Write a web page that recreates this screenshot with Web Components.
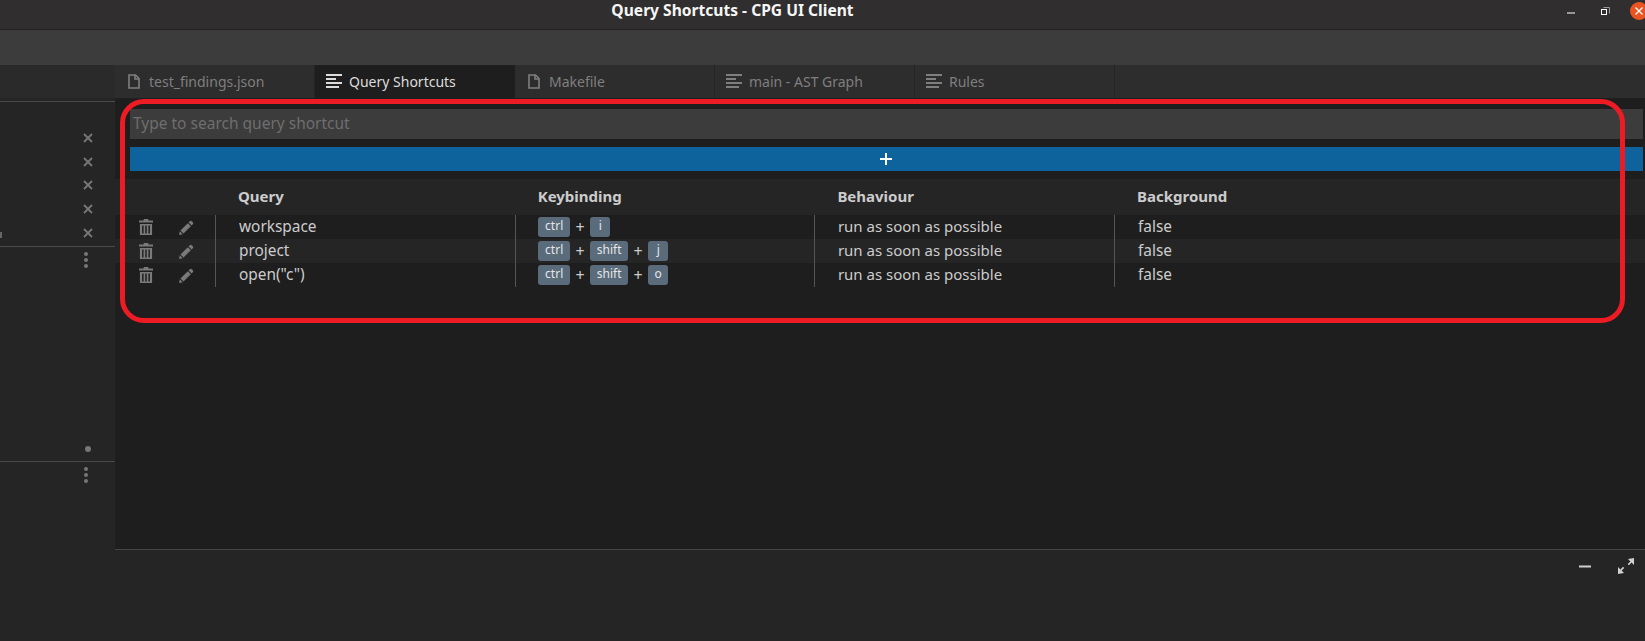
<!DOCTYPE html>
<html>
<head>
<meta charset="utf-8">
<title>Query Shortcuts - CPG UI Client</title>
<style>
    html, body { margin: 0; height: 100%; background: #1e1e1e; overflow: hidden; }
    body { font-family: "Noto Sans", sans-serif; }
</style>
</head>
<body>
<app-window>
    <title-bar slot="title">Query Shortcuts - CPG UI Client</title-bar>
    <side-bar slot="side"></side-bar>
    <tab-strip slot="tabs"></tab-strip>
    <query-shortcuts slot="main"></query-shortcuts>
    <bottom-panel slot="bottom"></bottom-panel>
</app-window>

<script>
const ICONS = {
    file: `<svg width="12" height="15" viewBox="0 0 12 15" fill="none" stroke="currentColor" stroke-width="1.6"><path d="M1 1h6.5L11 4.5V14H1z"/><path d="M7 1v4h4"/></svg>`,
    lines: `<svg width="16" height="15" viewBox="0 0 16 15" fill="currentColor"><rect y="0" width="16" height="2"/><rect y="4" width="10" height="2"/><rect y="8" width="16" height="2"/><rect y="12" width="13" height="2"/></svg>`,
    trash: `<svg width="14" height="16" viewBox="0 0 15 16" preserveAspectRatio="none" fill="currentColor"><path d="M5 0h5v1.5h5V3.500H0V1.500h5z"/><path d="M1 5h13v11H1zM3.300 6.500v8h1.600v-8zM6.700 6.500v8h1.600v-8zM10.100 6.500v8h1.600v-8z" fill-rule="evenodd"/></svg>`,
    pencil: `<svg width="15" height="15" viewBox="0 0 15 15" fill="currentColor"><path d="M10.800 1.200a1.400 1.400 0 0 1 2 0l1 1a1.400 1.400 0 0 1 0 2L12.600 5.400 9.600 2.400z"/><path d="M8.800 3.200l3 3-7.300 7.300-3-3z"/><path d="M.8 11.300l2.900 2.900L0 15z"/></svg>`,
    close: `<svg width="10" height="10" viewBox="0 0 10 10" stroke="currentColor" stroke-width="1.800"><path d="M1 1l8 8M9 1l-8 8"/></svg>`
};

// outer shell, only grid and slots
class AppWindow extends HTMLElement {
    constructor() {
        super();
        this.attachShadow({ mode: "open" });
        this.shadowRoot.innerHTML = `
            <style>
                :host {
                    display: grid;
                    grid-template-columns: 115px 1fr;
                    grid-template-rows: 30px 35px 33px 451px 1fr;
                    height: 641px;
                    width: 1645px;
                }
                .title { grid-column: 1 / 3; grid-row: 1; }
                .tool { grid-column: 1 / 3; grid-row: 2; background: #3c3c3c; }
                .side { grid-column: 1; grid-row: 3 / 6; min-height: 0; }
                .tabs { grid-column: 2; grid-row: 3; }
                .main { grid-column: 2; grid-row: 4; position: relative; }
                .bottom { grid-column: 2; grid-row: 5; }
            </style>
            <div class="title"><slot name="title"></slot></div>
            <div class="tool"></div>
            <div class="side"><slot name="side"></slot></div>
            <div class="tabs"><slot name="tabs"></slot></div>
            <div class="main"><slot name="main"></slot></div>
            <div class="bottom"><slot name="bottom"></slot></div>
        `;
    }
}

class TitleBar extends HTMLElement {
    constructor() {
        super();
        this.attachShadow({ mode: "open" });
        this.shadowRoot.innerHTML = `
            <style>
                :host {
                    display: flex;
                    box-sizing: border-box;
                    height: 30px;
                    justify-content: center;
                    padding: 0 180px 9px 0;
                    align-items: center;
                    background: #302e2e;
                    border-bottom: 1px solid #222;
                    color: #f5f5f5;
                    font: 700 15.6px "Noto Sans", sans-serif;
                    position: relative;
                }
                .buttons {
                    position: absolute;
                    right: 0;
                    top: 0;
                }
            </style>
            <slot></slot>
            <div class="buttons">
                <svg width="90" height="22" viewBox="0 0 90 22" style="display:block">
                    <rect x="12" y="12.500" width="8" height="1" fill="#fff"/>
                    <path d="M48.500 7.500h6v6" fill="none" stroke="#999"/>
                    <rect x="46.500" y="9.500" width="5" height="5" fill="none" stroke="#fff"/>
                    <circle cx="84" cy="11" r="9" fill="#e95420"/>
                    <path d="M80.500 7.500l7 7M87.500 7.500l-7 7" stroke="#fff" stroke-width="1.300"/>
                </svg>
            </div>
        `;
    }
}

class SideBar extends HTMLElement {
    constructor() {
        super();
        this.attachShadow({ mode: "open" });
        const dots = `<svg class="dots" width="6" height="18" viewBox="0 0 6 18" fill="#777"><circle cx="3" cy="3" r="2"/><circle cx="3" cy="9" r="2"/><circle cx="3" cy="15" r="2"/></svg>`;
        this.shadowRoot.innerHTML = `
            <style>
                :host {
                    display: flex;
                    flex-direction: column;
                    height: 100%;
                    background: #252526;
                    color: #777;
                }
                .head { height: 37px; background: linear-gradient(#2a2a2a 33px, #252526 33px); border-bottom: 1px solid #4a4a4a; flex: none; box-sizing: border-box; }
                .open { height: 145px; flex: none; border-bottom: 1px solid #4a4a4a; box-sizing: border-box; padding: 24px 22px 0 0; display: flex; flex-direction: column; align-items: flex-end; position: relative; }
                .open span { height: 23.700px; display: flex; align-items: center; }
                .open .cut { position: absolute; left: 0; top: 130px; width: 2px; height: 6px; background: #666; }
                .mid { height: 215px; flex: none; border-bottom: 1px solid #4a4a4a; box-sizing: border-box; display: flex; flex-direction: column; align-items: flex-end; padding: 4px 26px 0 0; position: relative; }
                .dot { position: absolute; right: 24px; bottom: 9px; width: 6px; height: 6px; border-radius: 50%; background: #777; }
                .end { padding: 4px 26px 0 0; display: flex; justify-content: flex-end; }
                .dots { display: block; }
            </style>
            <div class="head"></div>
            <div class="open">
                <span>${ICONS.close}</span><span>${ICONS.close}</span><span>${ICONS.close}</span><span>${ICONS.close}</span><span>${ICONS.close}</span>
                <i class="cut"></i>
            </div>
            <div class="mid">${dots}<i class="dot"></i></div>
            <div class="end">${dots}</div>
        `;
    }
}

class TabStrip extends HTMLElement {
    constructor() {
        super();
        this.attachShadow({ mode: "open" });
        const tabs = [
            ["file", "test_findings.json"],
            ["lines", "Query Shortcuts", true],
            ["file", "Makefile"],
            ["lines", "main - AST Graph"],
            ["lines", "Rules"]
        ];
        this.shadowRoot.innerHTML = `
            <style>
                :host {
                    display: flex;
                    height: 33px;
                    background: #2d2d2d;
                    font: 14px "Noto Sans", sans-serif;
                }
                .tab {
                    box-sizing: border-box;
                    width: 200px;
                    display: flex;
                    align-items: center;
                    gap: 7px;
                    padding-left: 11px;
                    color: #7f7f7f;
                    border-right: 1.500px solid #252525;
                }
                .tab.file { gap: 9px; padding-left: 13px; }
                .tab.active { background: #1e1e1e; color: #dcdcdc; border-right: 0; }
                svg { display: block; flex: none; }
                span { padding-bottom: 1px; }
            </style>
            ${tabs.map(t => `<div class="tab ${t[0]} ${t[2] ? "active" : ""}">${ICONS[t[0]]}<span>${t[1]}</span></div>`).join("")}
        `;
    }
}

class KeyCombo extends HTMLElement {
    constructor() {
        super();
        this.attachShadow({ mode: "open" });
        const keys = this.getAttribute("keys").split(" ");
        // key caps in the reference have fixed sizes per label
        const widths = { ctrl: 32, shift: 38 };
        this.shadowRoot.innerHTML = `
            <style>
                :host { display: flex; align-items: center; gap: 6px; }
                kbd {
                    box-sizing: border-box;
                    height: 20px;
                    width: 20px;
                    border-radius: 3px;
                    background: #5a6b7c;
                    color: #e6e6e6;
                    font: 12px/18px "Noto Sans", sans-serif;
                    text-align: center;
                }
                span { color: #cccccc; font-size: 16px; width: 8px; display: flex; justify-content: center; }
            </style>
            ${keys.map(k => `<kbd style="width:${widths[k] || 20}px">${k}</kbd>`).join("<span>+</span>")}
        `;
    }
}

class QueryShortcuts extends HTMLElement {
    constructor() {
        super();
        this.attachShadow({ mode: "open" });
        const rows = [
            ["workspace", "ctrl i"],
            ["project", "ctrl shift j"],
            ['open("c")', "ctrl shift o"]
        ];
        this.shadowRoot.innerHTML = `
            <style>
                :host {
                    display: block;
                    height: 100%;
                    box-sizing: border-box;
                    padding-top: 11px;
                    background: #1e1e1e;
                    color: #cccccc;
                    font: 15px "Noto Sans", sans-serif;
                    position: relative;
                }
                .search {
                    margin: 0 2px 0 15px;
                    height: 30px;
                    box-sizing: border-box;
                    background: #3c3c3c;
                    color: #6e6e6e;
                    padding: 0 0 2px 3px;
                    display: flex;
                    align-items: center;
                    font-size: 15.500px;
                }
                .add {
                    margin: 8px 2px 0 15px;
                    height: 24px;
                    padding-right: 2px;
                    background: #0e639c;
                    color: #fff;
                    display: flex;
                    align-items: center;
                    justify-content: center;
                }
                .grid { margin-top: 8px; }
                .row {
                    display: grid;
                    grid-template-columns: 100px repeat(4, 299.7px);
                    height: 24px;
                    align-items: center;
                }
                .row.head { height: 36px; background: #252526; font-weight: 700; }
                .row.odd { background: #252526; }
                .row > div { height: 100%; display: flex; align-items: center; padding: 0 0 2px 22.500px; box-sizing: border-box; border-left: 1px solid #555; }
                .row > .keys { padding-bottom: 0; }
                .row > .wide { font-size: 15.400px; padding-left: 23px; }
                .row > .actions { padding: 0 0 0 24px; gap: 26px; border: 0; color: #7a7a7a; }
                .row.head > div { border: 0; padding-left: 23px; }
                svg { display: block; }
                .ring {
                    position: absolute;
                    left: 5px;
                    top: 1px;
                    width: 1505px;
                    height: 224px;
                    box-sizing: border-box;
                    border: 5px solid #ed1c24;
                    border-radius: 24px;
                    pointer-events: none;
                }
            </style>
            <div class="search">Type to search query shortcut</div>
            <div class="add"><svg width="12" height="12" viewBox="0 0 12 12" fill="#fff"><rect x="5" width="2" height="12"/><rect y="5" width="12" height="2"/></svg></div>
            <div class="grid">
                <div class="row head"><div></div><div>Query</div><div>Keybinding</div><div>Behaviour</div><div>Background</div></div>
                ${rows.map((r, i) => `
                <div class="row ${i % 2 ? "odd" : ""}">
                    <div class="actions">${ICONS.trash}${ICONS.pencil}</div>
                    <div class="wide">${r[0]}</div>
                    <div class="keys"><key-combo keys="${r[1]}"></key-combo></div>
                    <div>run as soon as possible</div>
                    <div class="wide">false</div>
                </div>`).join("")}
            </div>
            <div class="ring"></div>
        `;
    }
}

class BottomPanel extends HTMLElement {
    constructor() {
        super();
        this.attachShadow({ mode: "open" });
        this.shadowRoot.innerHTML = `
            <style>
                :host {
                    display: flex;
                    justify-content: flex-end;
                    gap: 25px;
                    height: 100%;
                    box-sizing: border-box;
                    padding: 8px 11px 0 0;
                    background: #252526;
                    border-top: 1px solid #454545;
                }
                svg { display: block; }
            </style>
            <svg width="16" height="16" viewBox="0 0 16 16"><rect x="2" y="7.500" width="12" height="2" fill="#d0d0d0"/></svg>
            <svg width="16" height="16" viewBox="0 0 16 16" fill="#d0d0d0"><path d="M16 0v7l-2.400-2.400-2.700 2.700-1.200-1.200 2.700-2.700L10 1z"/><path d="M0 16V9l2.400 2.400 2.700-2.700 1.200 1.200-2.700 2.700L6 15z"/></svg>
        `;
    }
}

customElements.define("key-combo", KeyCombo);
customElements.define("app-window", AppWindow);
customElements.define("title-bar", TitleBar);
customElements.define("side-bar", SideBar);
customElements.define("tab-strip", TabStrip);
customElements.define("query-shortcuts", QueryShortcuts);
customElements.define("bottom-panel", BottomPanel);
</script>
</body>
</html>
